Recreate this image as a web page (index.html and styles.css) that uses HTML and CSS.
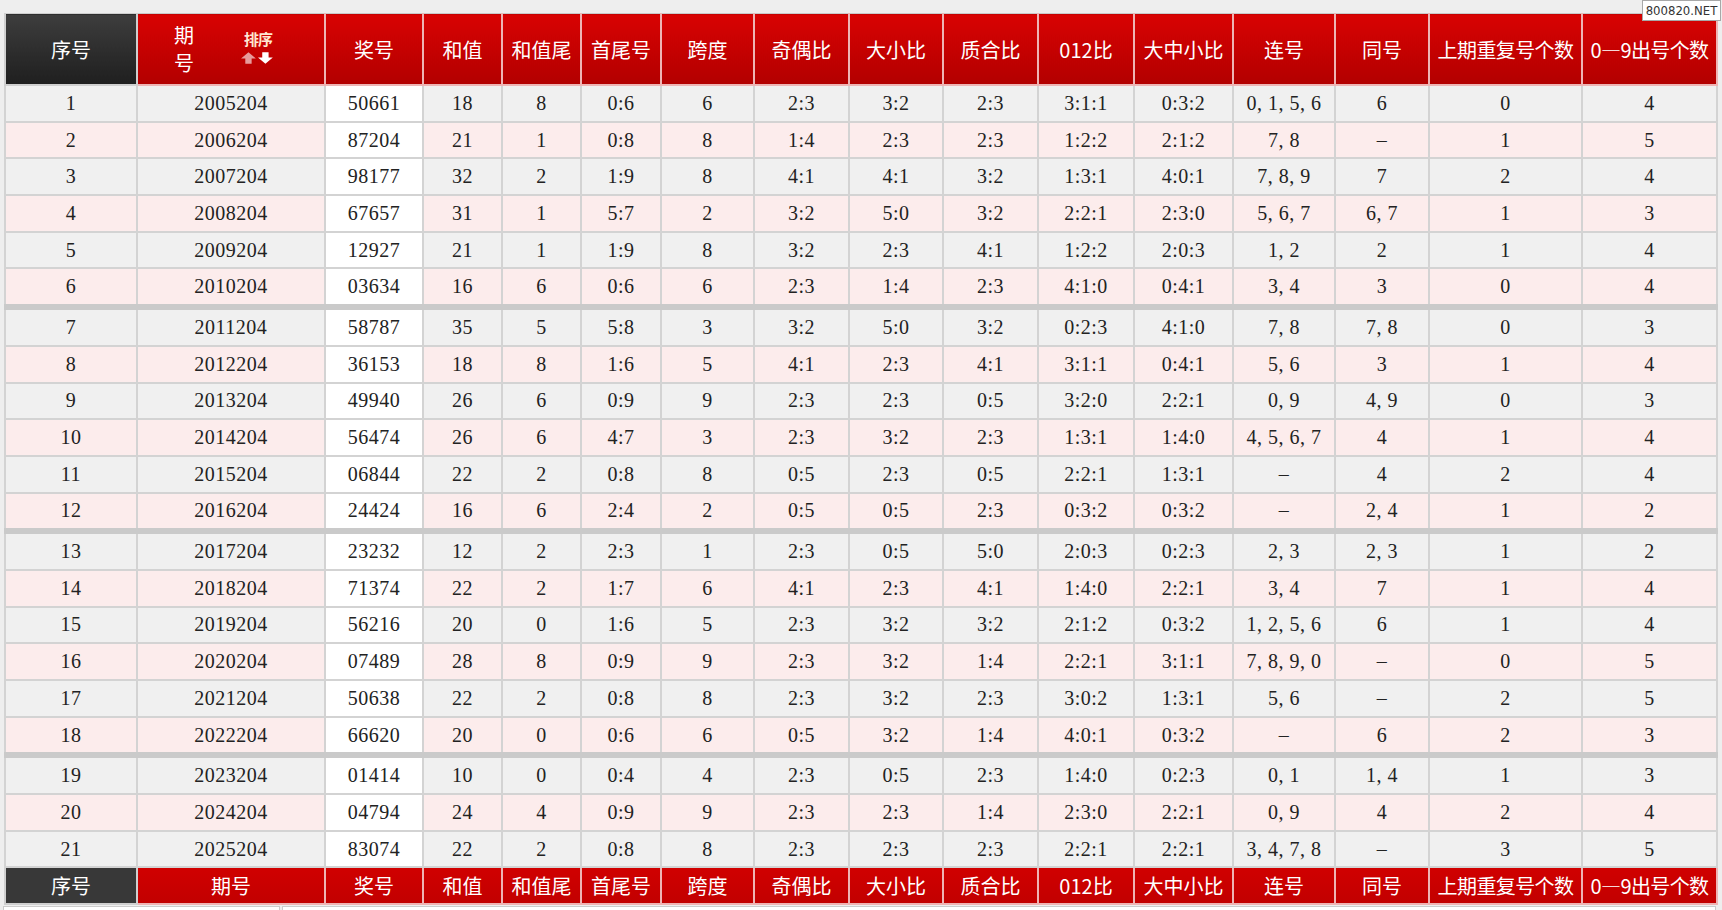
FILE: index.html
```html
<!DOCTYPE html>
<html lang="zh">
<head>
<meta charset="utf-8">
<title>开奖统计</title>
<link rel="stylesheet" href="styles.css">
</head>
<body>
<div class="mark">800820.NET</div>
<table class="grid">
<colgroup>
<col class="w1"><col class="w2"><col class="w3"><col class="w4"><col class="w5"><col class="w6"><col class="w7"><col class="w8"><col class="w9"><col class="w10"><col class="w11"><col class="w12"><col class="w13"><col class="w14"><col class="w15"><col class="w16">
</colgroup>
<thead>
<tr>
<th class="dark">序号</th>
<th><div class="qh"><span class="qh-t">期<br>号</span><span class="sort"><b>排序</b><svg width="36" height="12" viewBox="0 0 34 11"><path d="M8 0 L15 6 L11 6 L11 11 L5 11 L5 6 L1 6 Z" fill="#e79c9c"/><path d="M21 0 L27 0 L27 5 L31 5 L24 11 L17 5 L21 5 Z" fill="#ffffff"/></svg></span></div></th>
<th>奖号</th><th>和值</th><th>和值尾</th><th>首尾号</th><th>跨度</th><th>奇偶比</th><th>大小比</th><th>质合比</th><th>012比</th><th>大中小比</th><th>连号</th><th>同号</th><th class="tight">上期重复号个数</th><th class="tight">0—9出号个数</th>
</tr>
</thead>
<tbody>
<tr class="odd"><td>1</td><td>2005204</td><td class="w">50661</td><td>18</td><td>8</td><td>0:6</td><td>6</td><td>2:3</td><td>3:2</td><td>2:3</td><td>3:1:1</td><td>0:3:2</td><td>0, 1, 5, 6</td><td>6</td><td>0</td><td>4</td></tr>
<tr class="even"><td>2</td><td>2006204</td><td class="w">87204</td><td>21</td><td>1</td><td>0:8</td><td>8</td><td>1:4</td><td>2:3</td><td>2:3</td><td>1:2:2</td><td>2:1:2</td><td>7, 8</td><td>–</td><td>1</td><td>5</td></tr>
<tr class="odd"><td>3</td><td>2007204</td><td class="w">98177</td><td>32</td><td>2</td><td>1:9</td><td>8</td><td>4:1</td><td>4:1</td><td>3:2</td><td>1:3:1</td><td>4:0:1</td><td>7, 8, 9</td><td>7</td><td>2</td><td>4</td></tr>
<tr class="even"><td>4</td><td>2008204</td><td class="w">67657</td><td>31</td><td>1</td><td>5:7</td><td>2</td><td>3:2</td><td>5:0</td><td>3:2</td><td>2:2:1</td><td>2:3:0</td><td>5, 6, 7</td><td>6, 7</td><td>1</td><td>3</td></tr>
<tr class="odd"><td>5</td><td>2009204</td><td class="w">12927</td><td>21</td><td>1</td><td>1:9</td><td>8</td><td>3:2</td><td>2:3</td><td>4:1</td><td>1:2:2</td><td>2:0:3</td><td>1, 2</td><td>2</td><td>1</td><td>4</td></tr>
<tr class="even"><td>6</td><td>2010204</td><td class="w">03634</td><td>16</td><td>6</td><td>0:6</td><td>6</td><td>2:3</td><td>1:4</td><td>2:3</td><td>4:1:0</td><td>0:4:1</td><td>3, 4</td><td>3</td><td>0</td><td>4</td></tr>
</tbody>
<tbody>
<tr class="odd"><td>7</td><td>2011204</td><td class="w">58787</td><td>35</td><td>5</td><td>5:8</td><td>3</td><td>3:2</td><td>5:0</td><td>3:2</td><td>0:2:3</td><td>4:1:0</td><td>7, 8</td><td>7, 8</td><td>0</td><td>3</td></tr>
<tr class="even"><td>8</td><td>2012204</td><td class="w">36153</td><td>18</td><td>8</td><td>1:6</td><td>5</td><td>4:1</td><td>2:3</td><td>4:1</td><td>3:1:1</td><td>0:4:1</td><td>5, 6</td><td>3</td><td>1</td><td>4</td></tr>
<tr class="odd"><td>9</td><td>2013204</td><td class="w">49940</td><td>26</td><td>6</td><td>0:9</td><td>9</td><td>2:3</td><td>2:3</td><td>0:5</td><td>3:2:0</td><td>2:2:1</td><td>0, 9</td><td>4, 9</td><td>0</td><td>3</td></tr>
<tr class="even"><td>10</td><td>2014204</td><td class="w">56474</td><td>26</td><td>6</td><td>4:7</td><td>3</td><td>2:3</td><td>3:2</td><td>2:3</td><td>1:3:1</td><td>1:4:0</td><td>4, 5, 6, 7</td><td>4</td><td>1</td><td>4</td></tr>
<tr class="odd"><td>11</td><td>2015204</td><td class="w">06844</td><td>22</td><td>2</td><td>0:8</td><td>8</td><td>0:5</td><td>2:3</td><td>0:5</td><td>2:2:1</td><td>1:3:1</td><td>–</td><td>4</td><td>2</td><td>4</td></tr>
<tr class="even"><td>12</td><td>2016204</td><td class="w">24424</td><td>16</td><td>6</td><td>2:4</td><td>2</td><td>0:5</td><td>0:5</td><td>2:3</td><td>0:3:2</td><td>0:3:2</td><td>–</td><td>2, 4</td><td>1</td><td>2</td></tr>
</tbody>
<tbody>
<tr class="odd"><td>13</td><td>2017204</td><td class="w">23232</td><td>12</td><td>2</td><td>2:3</td><td>1</td><td>2:3</td><td>0:5</td><td>5:0</td><td>2:0:3</td><td>0:2:3</td><td>2, 3</td><td>2, 3</td><td>1</td><td>2</td></tr>
<tr class="even"><td>14</td><td>2018204</td><td class="w">71374</td><td>22</td><td>2</td><td>1:7</td><td>6</td><td>4:1</td><td>2:3</td><td>4:1</td><td>1:4:0</td><td>2:2:1</td><td>3, 4</td><td>7</td><td>1</td><td>4</td></tr>
<tr class="odd"><td>15</td><td>2019204</td><td class="w">56216</td><td>20</td><td>0</td><td>1:6</td><td>5</td><td>2:3</td><td>3:2</td><td>3:2</td><td>2:1:2</td><td>0:3:2</td><td>1, 2, 5, 6</td><td>6</td><td>1</td><td>4</td></tr>
<tr class="even"><td>16</td><td>2020204</td><td class="w">07489</td><td>28</td><td>8</td><td>0:9</td><td>9</td><td>2:3</td><td>3:2</td><td>1:4</td><td>2:2:1</td><td>3:1:1</td><td>7, 8, 9, 0</td><td>–</td><td>0</td><td>5</td></tr>
<tr class="odd"><td>17</td><td>2021204</td><td class="w">50638</td><td>22</td><td>2</td><td>0:8</td><td>8</td><td>2:3</td><td>3:2</td><td>2:3</td><td>3:0:2</td><td>1:3:1</td><td>5, 6</td><td>–</td><td>2</td><td>5</td></tr>
<tr class="even"><td>18</td><td>2022204</td><td class="w">66620</td><td>20</td><td>0</td><td>0:6</td><td>6</td><td>0:5</td><td>3:2</td><td>1:4</td><td>4:0:1</td><td>0:3:2</td><td>–</td><td>6</td><td>2</td><td>3</td></tr>
</tbody>
<tbody>
<tr class="odd"><td>19</td><td>2023204</td><td class="w">01414</td><td>10</td><td>0</td><td>0:4</td><td>4</td><td>2:3</td><td>0:5</td><td>2:3</td><td>1:4:0</td><td>0:2:3</td><td>0, 1</td><td>1, 4</td><td>1</td><td>3</td></tr>
<tr class="even"><td>20</td><td>2024204</td><td class="w">04794</td><td>24</td><td>4</td><td>0:9</td><td>9</td><td>2:3</td><td>2:3</td><td>1:4</td><td>2:3:0</td><td>2:2:1</td><td>0, 9</td><td>4</td><td>2</td><td>4</td></tr>
<tr class="odd"><td>21</td><td>2025204</td><td class="w">83074</td><td>22</td><td>2</td><td>0:8</td><td>8</td><td>2:3</td><td>2:3</td><td>2:3</td><td>2:2:1</td><td>2:2:1</td><td>3, 4, 7, 8</td><td>–</td><td>3</td><td>5</td></tr>
</tbody>
<tfoot>
<tr>
<th class="dark">序号</th><th>期号</th><th>奖号</th><th>和值</th><th>和值尾</th><th>首尾号</th><th>跨度</th><th>奇偶比</th><th>大小比</th><th>质合比</th><th>012比</th><th>大中小比</th><th>连号</th><th>同号</th><th class="tight">上期重复号个数</th><th class="tight">0—9出号个数</th>
</tr>
</tfoot>
</table>
<div class="below"><div class="box b1"></div><div class="box b2"></div></div>
</body>
</html>
```
FILE: styles.css
```css
html, body { margin: 0; padding: 0; }
body {
  background: #eeeeee;
  padding: 13px 6px 0 4px;
  position: relative;
  height: 897px;
  overflow: hidden;
  font-family: "Liberation Serif", "Noto Sans CJK SC", serif;
}
.mark {
  position: absolute;
  top: 0;
  right: 1px;
  width: 77px;
  height: 19px;
  background: #fff;
  border: 1px solid #a8a8a8;
  font: 13px/19px "DejaVu Sans Condensed", "Liberation Sans", sans-serif;
  color: #333;
  text-align: center;
  z-index: 2;
}
.grid {
  width: 1712px;
  table-layout: fixed;
  border-collapse: collapse;
}
.w1 { width: 132px; } .w2 { width: 188px; } .w3 { width: 98px; } .w4 { width: 79px; }
.w5 { width: 79px; } .w6 { width: 80px; } .w7 { width: 93px; } .w8 { width: 95px; }
.w9 { width: 94px; } .w10 { width: 95px; } .w11 { width: 96px; } .w12 { width: 99px; }
.w13 { width: 102px; } .w14 { width: 94px; } .w15 { width: 153px; } .w16 { width: 135px; }

th {
  font-family: "Noto Sans CJK SC", sans-serif;
  font-weight: 400;
  font-size: 20px;
  color: #fff;
  padding: 0;
  border: 2px solid #eeb4b4;
  background: linear-gradient(#d80202, #b20000);
  white-space: nowrap;
}
thead th { height: 70px; border-top: 1px solid #c9c9c9; }
thead th.dark { background: linear-gradient(#3d3d3d, #1f1f1f); border-color: #cfcfcf; }
tfoot th { height: 35px; line-height: 33px; background: linear-gradient(#d00000, #c20000); }
tfoot th.dark { background: #383838; border-color: #cfcfcf; }
th.tight { letter-spacing: -0.6px; }

.qh { display: flex; align-items: center; justify-content: center; gap: 46px; padding-right: 12px; }
.qh-t { line-height: 28px; text-align: left; }
.sort { display: flex; flex-direction: column; align-items: center; gap: 6px; margin-top: -2px; }
.sort b { font-size: 15px; line-height: 14px; font-weight: 700; color: #ffe6d2; letter-spacing: -1px; }

td {
  height: 34.7px;
  padding: 0;
  text-align: center;
  font-size: 20px;
  letter-spacing: 0.5px;
  color: #222;
  border: 2px solid #d3d3d3;
  white-space: nowrap;
}
tr.odd td { background: #f0f0f0; }
tr.even td { background: #fcecec; }
td.w, tr.odd td.w, tr.even td.w { background: #ffffff; }
tbody + tbody tr:first-child td { border-top: 6px solid #cacaca; }

.below { display: flex; gap: 2px; margin-top: 1px; }
.box { height: 20px; background: #fff; border: 1px solid #cccccc; }
.b1 { width: 275px; margin-left: -1px; }
.b2 { flex: 1; }
```
